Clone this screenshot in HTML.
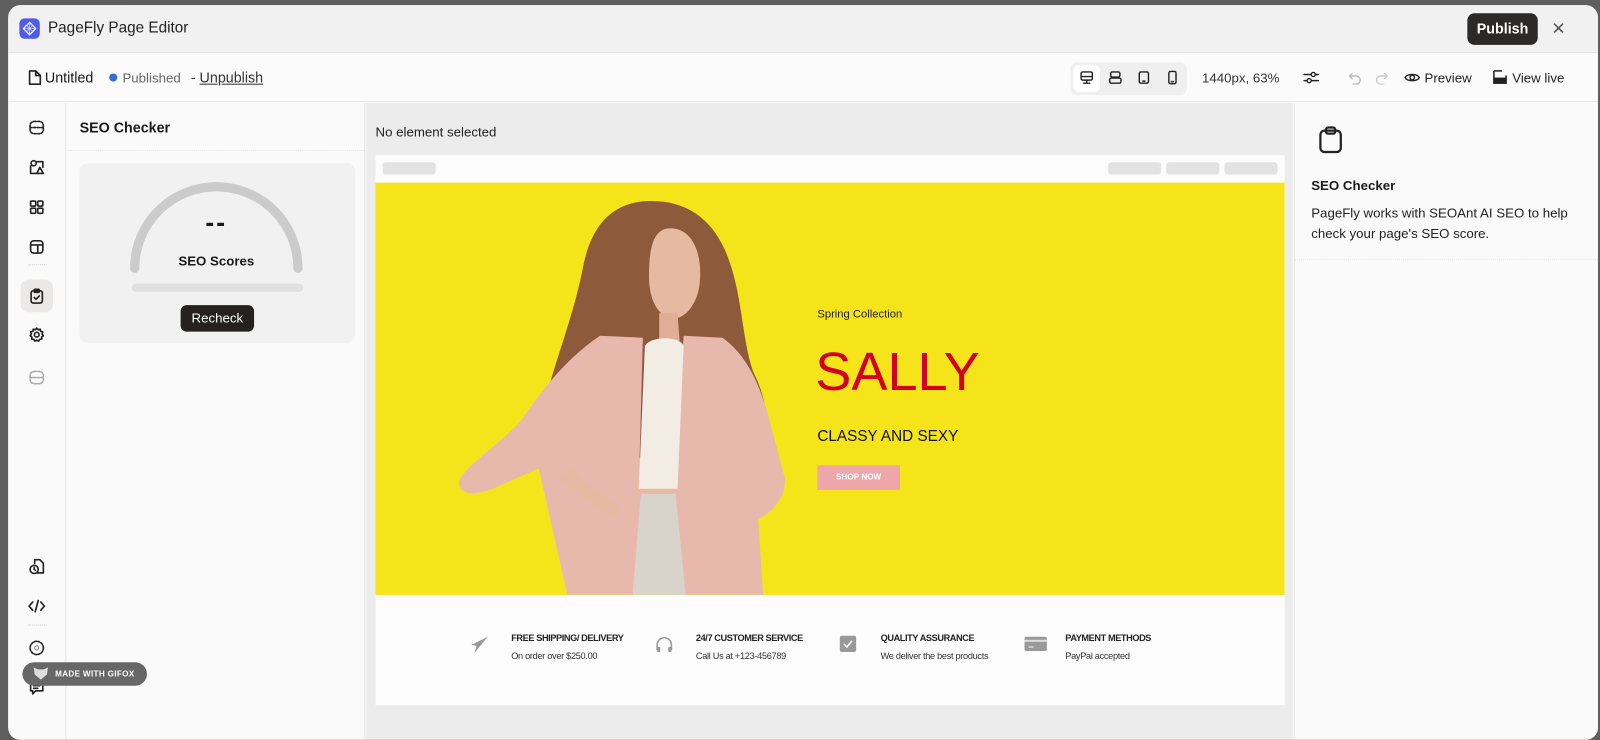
<!DOCTYPE html>
<html><head><meta charset="utf-8"><style>
*{box-sizing:border-box;margin:0;padding:0}
body{width:1600px;height:707px;background:#5f5f5f;font-family:"Liberation Sans",sans-serif;color:#1a1a1a;overflow:hidden;position:relative}
#wrap{position:absolute;left:0;top:0;width:1568px;height:693px;transform:scale(1.0204);transform-origin:0 0}
.win{position:absolute;left:8px;top:5px;width:1558px;height:720px;background:#fafafa;border-radius:12px;overflow:hidden}
.title{position:absolute;left:0;top:0;right:0;height:47px;background:#f1f1f1;border-bottom:1px solid #e6e6e6}
.tool{position:absolute;left:0;top:47px;right:0;height:48px;background:#fbfbfb;border-bottom:1px solid #e8e8e8}
.abs{position:absolute}
.sh{position:absolute;left:0;right:0;top:-4px;bottom:0}
.rail{position:absolute;left:0;top:96px;width:57px;bottom:0;border-right:1px solid #e6e6e6;background:#fafafa}
.panel{position:absolute;left:58px;top:96px;width:292px;bottom:0;background:#fafafa;border-right:1px solid #e3e3e3}
.canvas{position:absolute;left:351px;top:96px;width:908px;bottom:0;background:#ececec}
.right{position:absolute;left:1260px;top:96px;right:0;bottom:0;background:#fafafa;border-left:1px solid #e6e6e6}
svg.i{position:absolute;fill:none;stroke:#222;stroke-width:1.6;stroke-linecap:round;stroke-linejoin:round}
.feat b{display:block;font-size:9px;font-weight:bold;color:#222;line-height:14px;margin-bottom:1px;letter-spacing:-.4px}
.feat span{font-size:9px;color:#333;letter-spacing:-.3px;line-height:14px}
</style></head><body>
<div id="wrap">
<div class="win">
 <div class="title">
  <div class="abs" style="left:11px;top:13px;width:20px;height:20px;background:#4f5bef;border-radius:5px"></div>
  <svg class="abs" style="left:14px;top:16px" width="14" height="14" viewBox="0 0 14 14"><path d="M7 1L13 7L7 13L1 7Z" fill="none" stroke="#fff" stroke-width="1.3"/><path d="M4 4L10 10M10 4L4 10M7 1V13M1 7H13" stroke="#dfe2ff" stroke-width=".7"/></svg>
  <div class="abs" style="left:39px;top:14px;font-size:15px;font-weight:500;color:#222">PageFly Page Editor</div>
  <div class="abs" style="left:1430px;top:8px;width:69px;height:31px;background:#2b2a29;border-radius:7px;color:#fff;font-size:14px;font-weight:bold;text-align:center;line-height:31px">Publish</div>
  <div class="abs" style="left:1513px;top:10px;font-size:22px;color:#555;font-weight:300">×</div>
 </div>
 <div class="tool">
  <svg class="i" style="left:19px;top:16px" width="14" height="16" viewBox="0 0 14 16"><path d="M2 1.5H8L12.5 6V14.5H2Z"/><path d="M8 1.5V6H12.5"/></svg>
  <div class="abs" style="left:36px;top:16px;font-size:14px">Untitled</div>
  <div class="abs" style="left:99px;top:20px;width:8px;height:8px;border-radius:50%;background:#2f6fd6"></div>
  <div class="abs" style="left:112px;top:17px;font-size:13px;color:#666">Published</div>
  <div class="abs" style="left:179px;top:16px;font-size:14px;color:#333">- <u>Unpublish</u></div>
  <div class="abs" style="left:1041px;top:9px;width:114px;height:32px;background:#efefef;border-radius:6px"></div>
  <div class="abs" style="left:1044px;top:12px;width:26px;height:26px;background:#fff;border-radius:5px"></div>
  <svg class="i" style="left:1050px;top:17px;stroke-width:1.4" width="14" height="14" viewBox="0 0 14 14"><rect x="1.5" y="1.5" width="11" height="8" rx="1.5"/><path d="M7 9.5V12.5M4 12.5H10M1.5 6H12.5"/></svg>
  <svg class="i" style="left:1078px;top:17px;stroke-width:1.4" width="14" height="14" viewBox="0 0 14 14"><rect x="2.5" y="1.5" width="9" height="5" rx="1.5"/><rect x="1.5" y="7.5" width="11" height="5" rx="1.5"/></svg>
  <svg class="i" style="left:1106px;top:17px;stroke-width:1.4" width="14" height="14" viewBox="0 0 14 14"><rect x="2.5" y="1.5" width="9" height="11" rx="1.5"/><path d="M6 10.5H8"/></svg>
  <svg class="i" style="left:1134px;top:17px;stroke-width:1.4" width="14" height="14" viewBox="0 0 14 14"><rect x="3.5" y="1" width="7" height="12" rx="1.5"/><path d="M6 11H8"/></svg>
  <div class="abs" style="left:1170px;top:17px;font-size:13px;color:#333">1440px, 63%</div>
  <svg class="i" style="left:1269px;top:17px;stroke-width:1.4" width="16" height="14" viewBox="0 0 16 14"><path d="M1 4H15M1 10H15"/><circle cx="10" cy="4" r="2" fill="#fbfbfb"/><circle cx="6" cy="10" r="2" fill="#fbfbfb"/></svg>
  <svg class="i" style="left:1313px;top:18px;stroke:#bbb;stroke-width:1.4" width="14" height="13" viewBox="0 0 14 13"><path d="M4 2L1.5 4.5L4 7M1.5 4.5H8A4 4 0 0 1 8 12.5H5"/></svg>
  <svg class="i" style="left:1339px;top:18px;stroke:#ccc;stroke-width:1.4" width="14" height="13" viewBox="0 0 14 13"><path d="M10 2L12.5 4.5L10 7M12.5 4.5H6A4 4 0 0 0 6 12.5H9"/></svg>
  <svg class="i" style="left:1368px;top:18px;stroke-width:1.4" width="16" height="12" viewBox="0 0 16 12"><path d="M1 6C3 2 13 2 15 6C13 10 3 10 1 6Z"/><circle cx="8" cy="6" r="2.2"/></svg>
  <div class="abs" style="left:1388px;top:17px;font-size:13px;color:#222">Preview</div>
  <svg class="abs" style="left:1455px;top:16px" width="14" height="15" viewBox="0 0 14 15"><path d="M1 1.5H9M1 1.5V13.5H13V6" fill="none" stroke="#222" stroke-width="1.5"/><rect x="1" y="8" width="12" height="6" fill="#222"/></svg>
  <div class="abs" style="left:1474px;top:17px;font-size:13px;color:#222">View live</div>
 </div>
 <div class="rail"><div class="sh">
  <svg class="i" style="left:20px;top:20px;stroke-dasharray:2 1.5" width="16" height="16" viewBox="0 0 16 16"><rect x="1.5" y="2" width="13" height="12" rx="4"/><path d="M1.5 8H14.5"/></svg>
  <svg class="i" style="left:20px;top:59px" width="16" height="16" viewBox="0 0 16 16"><circle cx="5" cy="4" r="2.5"/><path d="M2 6.5V14H7M8 14L11 8L14.5 14ZM8 2.5H14V8"/></svg>
  <svg class="i" style="left:20px;top:98px" width="16" height="16" viewBox="0 0 16 16"><rect x="2" y="2" width="5" height="5" rx="1"/><rect x="9" y="2" width="5" height="5" rx="1"/><rect x="2" y="9" width="5" height="5" rx="1"/><rect x="9" y="9" width="5" height="5" rx="1"/></svg>
  <svg class="i" style="left:20px;top:137px" width="16" height="16" viewBox="0 0 16 16"><rect x="2" y="2" width="12" height="12" rx="3"/><path d="M2 6H14M9 6V14"/></svg>
  <div class="abs" style="left:20px;top:162px;width:18px;border-top:1px dotted #ccc"></div>
  <div class="abs" style="left:12px;top:177px;width:32px;height:32px;background:#ebe8e8;border-radius:8px"></div>
  <svg class="i" style="left:20px;top:185px" width="16" height="16" viewBox="0 0 16 16"><rect x="2.5" y="3" width="11" height="12" rx="2"/><rect x="5.5" y="1.5" width="5" height="3" rx="1"/><path d="M5.5 9.5L7.3 11.3L10.5 8"/></svg>
  <svg class="i" style="left:20px;top:223px" width="16" height="16" viewBox="0 0 16 16"><circle cx="8" cy="8" r="2.3"/><path d="M8 1.5L9.3 3.2L11.4 2.6L11.8 4.7L13.9 5.3L13.2 7.3L14.5 8.9L12.8 10.2L13 12.3L10.9 12.5L9.8 14.4L8 13.3L6.2 14.4L5.1 12.5L3 12.3L3.2 10.2L1.5 8.9L2.8 7.3L2.1 5.3L4.2 4.7L4.6 2.6L6.7 3.2Z"/></svg>
  <svg class="i" style="left:20px;top:265px;stroke:#aaa;stroke-dasharray:2 1.5" width="16" height="16" viewBox="0 0 16 16"><rect x="1.5" y="2" width="13" height="12" rx="4"/><path d="M1.5 8H14.5"/></svg>
  <svg class="i" style="left:20px;top:450px" width="16" height="16" viewBox="0 0 16 16"><path d="M6 5V1.5H11L14.5 5V14.5H8"/><circle cx="5.5" cy="11" r="4"/><path d="M5.5 9V11L6.8 12"/></svg>
  <svg class="i" style="left:19px;top:489px" width="18" height="16" viewBox="0 0 18 16"><path d="M5 4L1.5 8L5 12M13 4L16.5 8L13 12M10.5 2.5L7.5 13.5"/></svg>
  <div class="abs" style="left:20px;top:515px;width:18px;border-top:1px dotted #ccc"></div>
  <svg class="i" style="left:20px;top:530px;stroke-dasharray:2 1.5" width="16" height="16" viewBox="0 0 16 16"><circle cx="8" cy="8" r="6.5"/><circle cx="8" cy="8" r="2" stroke="#888" stroke-dasharray="none" stroke-width="1"/></svg>
  <svg class="i" style="left:20px;top:569px" width="16" height="16" viewBox="0 0 16 16"><path d="M2 3H14V11H7L4 14V11H2Z"/><path d="M5 6H11M5 8.5H9"/></svg>
 </div></div>
 <div class="panel"><div class="sh">
  <div class="abs" style="left:12px;top:20px;font-size:14px;font-weight:bold">SEO Checker</div>
  <div class="abs" style="left:0;right:0;top:50px;border-top:1px dotted #e3e3e3"></div>
  <div class="abs" style="left:12px;top:63px;width:270px;height:176px;background:#f1f1f1;border-radius:8px"></div>
  <svg class="abs" style="left:58px;top:76px" width="176" height="100" viewBox="0 0 176 100"><path d="M8 90A80 80 0 0 1 168 90" fill="none" stroke="#cbcbcb" stroke-width="9" stroke-linecap="round"/></svg>
  <div class="abs" style="left:63px;top:181px;width:168px;height:8px;background:#e0e0e0;border-radius:4px"></div>
  <div class="abs" style="left:0;width:292px;text-align:center;top:106px;font-size:26px;font-weight:bold;letter-spacing:2px">--</div>
  <div class="abs" style="left:0;width:292px;text-align:center;top:151px;font-size:13px;font-weight:bold">SEO Scores</div>
  <div class="abs" style="left:111px;top:202px;width:72px;height:26px;background:#252120;border-radius:6px;color:#fff;font-size:13px;text-align:center;line-height:26px">Recheck</div>
 </div></div>
 <div class="canvas"><div class="sh">
  <div class="abs" style="left:9px;top:25px;font-size:13px;color:#222">No element selected</div>
  <div class="abs" style="left:9px;top:55px;width:891px;height:539px;background:#fcfcfc;overflow:hidden">
   <div class="abs" style="left:7px;top:7px;width:52px;height:12px;background:#e2e2e2;border-radius:3px"></div>
   <div class="abs" style="left:718px;top:7px;width:52px;height:12px;background:#e2e2e2;border-radius:3px"></div>
   <div class="abs" style="left:775px;top:7px;width:52px;height:12px;background:#e2e2e2;border-radius:3px"></div>
   <div class="abs" style="left:832px;top:7px;width:52px;height:12px;background:#e2e2e2;border-radius:3px"></div>
   <div class="abs" style="left:0;top:27px;width:891px;height:404px;background:#f5e41a;overflow:hidden">
    <svg class="abs" style="left:70px;top:0" width="340" height="404" viewBox="0 0 340 404">
     <path d="M200 18C160 18 140 45 133 85C125 125 110 165 100 200C92 235 105 260 130 270L300 270C320 250 315 215 300 185C288 150 290 105 272 65C258 35 235 18 200 18Z" fill="#8e5a3c"/>
     <path d="M215 45C238 42 250 65 248 95C247 118 233 135 220 133C205 130 198 112 198 92C198 65 202 48 215 45Z" fill="#e7b9a0"/>
     <path d="M208 128L226 128L228 155L208 157Z" fill="#dfae95"/>
     <path d="M150 150C120 170 95 200 75 230C55 255 20 275 12 292C10 305 25 308 45 300L90 280L118 404H310L305 330C325 320 335 300 330 285L318 240C308 200 295 170 270 152L232 150L222 300L188 300L192 152Z" fill="#e9b8ad"/>
     <path d="M194 160C200 150 228 150 232 160L226 300L188 300Z" fill="#f2ece4"/>
     <path d="M190 305L224 305L234 404H182Z" fill="#d8d4cc"/>
     <path d="M110 290C124 300 145 318 165 328L170 318C155 308 135 294 122 280Z" fill="#e7b9a0"/>
    </svg>
    <div class="abs" style="left:433px;top:123px;font-size:11px;color:#222">Spring Collection</div>
    <div class="abs" style="left:431px;top:155px;font-size:53px;color:#d40022">SALLY</div>
    <div class="abs" style="left:433px;top:240px;font-size:15px;color:#111">CLASSY AND SEXY</div>
    <div class="abs" style="left:433px;top:277px;width:81px;height:24px;background:#eea6a8;color:#fff;font-size:8px;font-weight:bold;text-align:center;line-height:24px">SHOP NOW</div>
   </div>
   <svg class="abs" style="left:93px;top:471px" width="18" height="18" viewBox="0 0 18 18"><path d="M17 1L1 9L6 10L4 17L8 12Z" fill="#999"/></svg>
   <div class="abs feat" style="left:133px;top:466px"><b>FREE SHIPPING/ DELIVERY</b><span>On order over $250.00</span></div>
   <svg class="abs" style="left:274px;top:471px" width="18" height="18" viewBox="0 0 18 18"><path d="M2 14V9A7 7 0 0 1 16 9V14" fill="none" stroke="#999" stroke-width="1.5"/><rect x="2" y="11" width="3" height="5" fill="#999"/><rect x="13" y="11" width="3" height="5" fill="#999"/></svg>
   <div class="abs feat" style="left:314px;top:466px"><b>24/7 CUSTOMER SERVICE</b><span>Call Us at +123-456789</span></div>
   <svg class="abs" style="left:454px;top:470px" width="18" height="18" viewBox="0 0 18 18"><rect x="1" y="1" width="16" height="16" rx="2" fill="#999"/><path d="M5 9L8 12L13 6" fill="none" stroke="#fff" stroke-width="1.5"/></svg>
   <div class="abs feat" style="left:495px;top:466px"><b>QUALITY ASSURANCE</b><span>We deliver the best products</span></div>
   <svg class="abs" style="left:636px;top:470px" width="22" height="18" viewBox="0 0 22 18"><rect x="0" y="2" width="22" height="14" rx="2" fill="#999"/><rect x="0" y="5" width="22" height="2" fill="#ddd"/><path d="M4 12H9" stroke="#eee"/></svg>
   <div class="abs feat" style="left:676px;top:466px"><b>PAYMENT METHODS</b><span>PayPal accepted</span></div>
  </div>
 </div></div>
 <div class="right"><div class="sh">
  <svg class="i" style="left:22px;top:26px;stroke-width:2.2" width="26" height="28" viewBox="0 0 26 28"><rect x="3" y="5" width="20" height="21" rx="4"/><rect x="8.5" y="2" width="9" height="6" rx="2"/></svg>
  <div class="abs" style="left:16px;top:77px;font-size:13px;font-weight:bold">SEO Checker</div>
  <div class="abs" style="left:16px;top:102px;font-size:13px;line-height:20px;color:#222;width:260px">PageFly works with SEOAnt AI SEO to help check your page's SEO score.</div>
  <div class="abs" style="left:0;right:0;top:157px;border-top:1px dotted #e3e3e3"></div>
 </div></div>
</div>
<div class="abs" style="left:22px;top:649px;width:122px;height:23px;background:#676767;border-radius:12px;color:#fff;font-size:8px;font-weight:bold;line-height:23px;padding-left:32px;letter-spacing:.3px">MADE WITH GIFOX</div>
<svg class="abs" style="left:32px;top:653px" width="16" height="14" viewBox="0 0 16 14"><path d="M1 1L5 3H11L15 1L14 8L8 13L2 8Z" fill="#ddd"/></svg>
</div>
</body></html>
